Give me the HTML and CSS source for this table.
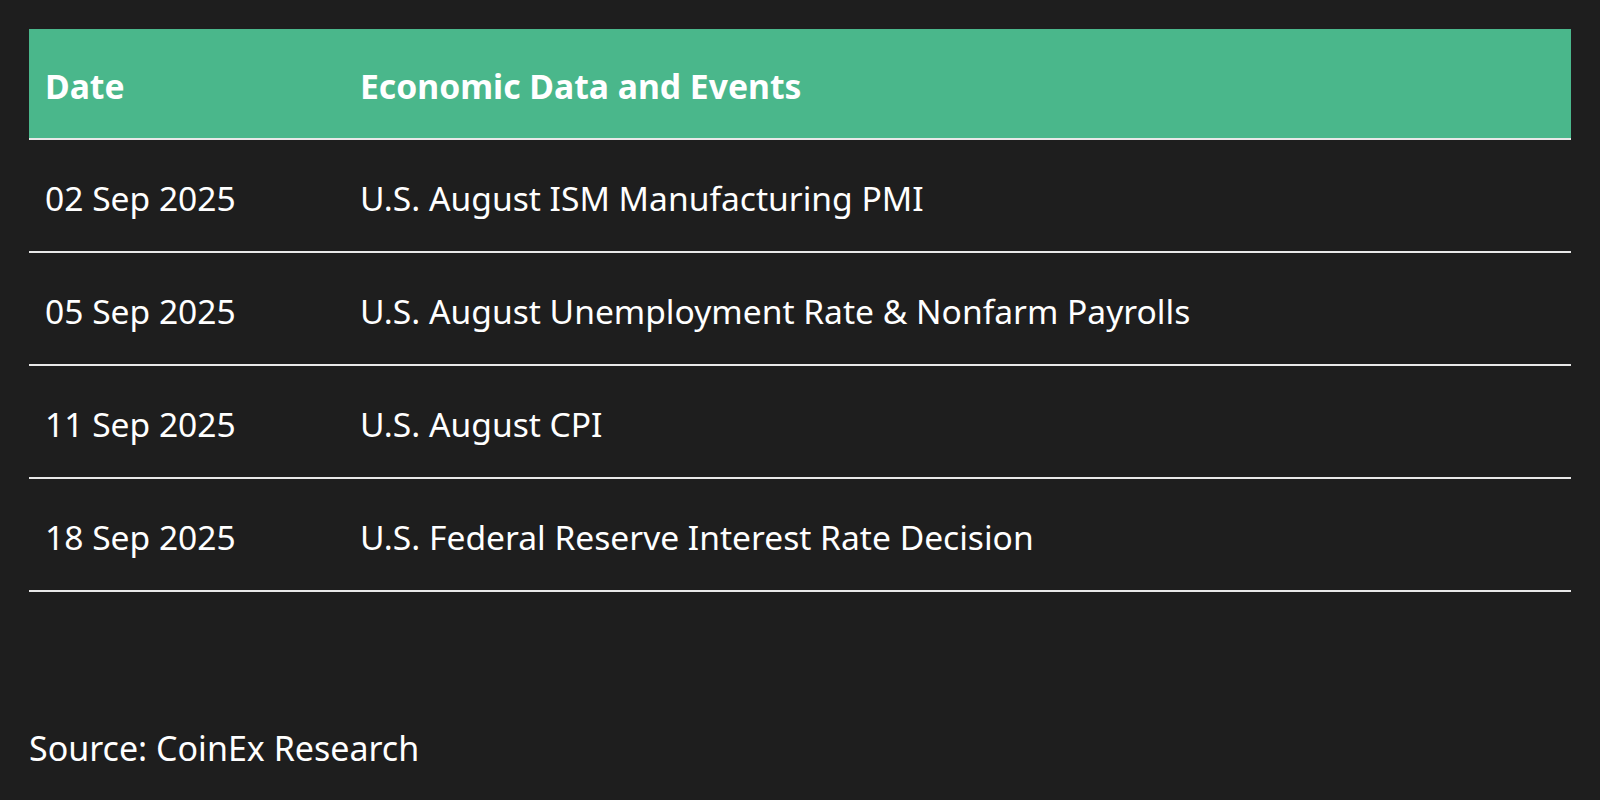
FILE: index.html
```html
<!DOCTYPE html>
<html lang="en">
<head>
<meta charset="utf-8">
<title>Economic Data and Events</title>
<link rel="stylesheet" href="styles.css">
</head>
<body>
<main class="page">
  <table class="events">
    <thead>
      <tr>
        <th class="col-date">Date</th>
        <th>Economic Data and Events</th>
      </tr>
    </thead>
    <tbody>
      <tr><td>02 Sep 2025</td><td>U.S. August ISM Manufacturing PMI</td></tr>
      <tr><td>05 Sep 2025</td><td>U.S. August Unemployment Rate &amp; Nonfarm Payrolls</td></tr>
      <tr><td>11 Sep 2025</td><td>U.S. August CPI</td></tr>
      <tr><td>18 Sep 2025</td><td>U.S. Federal Reserve Interest Rate Decision</td></tr>
    </tbody>
  </table>
  <p class="source">Source: CoinEx Research</p>
</main>
</body>
</html>
```

FILE: styles.css
```css
html, body {
  margin: 0;
  padding: 0;
  background: #1e1e1e;
}

body {
  width: 1600px;
  height: 800px;
  overflow: hidden;
  font-family: "Noto Sans", "Open Sans", sans-serif;
  color: #ffffff;
}

.page {
  padding: 29px 29px 0 29px;
}

.events {
  width: 100%;
  border-collapse: collapse;
  table-layout: fixed;
}

.events th,
.events td {
  text-align: left;
  vertical-align: middle;
  padding: 4px 0 0 16px;
}

.events th {
  background: #4ab78b;
  height: 105px;
  font-weight: 700;
  font-size: 33.7px;
  border-bottom: 2px solid #e8e8e8;
}

.events .col-date {
  width: 299px;
}

.events td {
  height: 107px;
  font-size: 33.6px;
  font-weight: 400;
  border-bottom: 2px solid #e8e8e8;
}

.source {
  margin: 133px 0 0 0;
  font-size: 34px;
}
```
